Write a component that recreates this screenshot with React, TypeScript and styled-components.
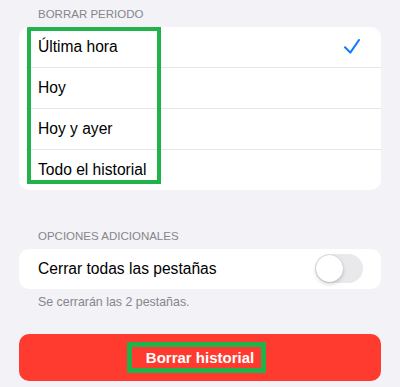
import styled, { createGlobalStyle } from "styled-components";

const GlobalStyle = createGlobalStyle`
  html, body {
    margin: 0;
    padding: 0;
    background: #f2f2f7;
  }
  body {
    font-family: "Liberation Sans", Arial, sans-serif;
    -webkit-font-smoothing: antialiased;
  }
`;

const Page = styled.div`
  width: 400px;
  height: 387px;
  overflow: hidden;
  padding: 0 19px;
  box-sizing: border-box;
  background: #f2f2f7;
`;

const SectionHeader = styled.div<{ $top: number }>`
  padding: ${(p) => p.$top}px 0 6.4px 19px;
  font-size: 11.5px;
  line-height: 14px;
  color: #86868b;
  text-transform: uppercase;
`;

const Card = styled.div`
  position: relative;
  background: #ffffff;
  border-radius: 10px;
  overflow: hidden;
`;

const Row = styled.div`
  display: flex;
  align-items: center;
  justify-content: space-between;
  height: 40px;
  padding: 0 18px 0 19px;
  font-size: 15.6px;
  color: #000000;
`;

const Separator = styled.div`
  height: 1px;
  margin-left: 7px;
  background: #e6e6ea;
`;

// recuadro verde de anotación encima de la lista
const Highlight = styled.div`
  position: absolute;
  left: 8px;
  top: 0;
  width: 134px;
  height: 157px;
  border: 4.5px solid #21b24b;
  box-sizing: border-box;
  pointer-events: none;
`;

const Check = styled.svg`
  width: 16px;
  height: 16px;
  margin-right: 3px;
`;

const Toggle = styled.div<{ $on: boolean }>`
  position: relative;
  width: 48px;
  height: 29px;
  border-radius: 15px;
  background: ${(p) => (p.$on ? "#34c759" : "#e9e9eb")};
`;

const Knob = styled.div<{ $on: boolean }>`
  position: absolute;
  top: 1px;
  left: ${(p) => (p.$on ? "20px" : "1px")};
  width: 27px;
  height: 27px;
  border-radius: 50%;
  background: #ffffff;
  box-shadow: 0 2px 4px rgba(0, 0, 0, 0.18), 0 0 1px rgba(0, 0, 0, 0.25);
`;

const Footer = styled.div`
  padding: 6px 0 0 19px;
  font-size: 12.4px;
  line-height: 15px;
  color: #86868b;
`;

const DeleteButton = styled.button`
  display: flex;
  align-items: center;
  justify-content: center;
  width: 100%;
  height: 47px;
  margin-top: 24px;
  border: none;
  border-radius: 10px;
  background: #ff3b30;
  color: #ffffff;
  font-family: inherit;
  cursor: pointer;
`;

const ButtonLabel = styled.span`
  display: inline-block;
  margin-right: 7px;
  padding: 0 7px 0 14px;
  border: 5px solid #21b24b;
  font-size: 15px;
  font-weight: bold;
  line-height: 21px;
`;

const periods = ["Última hora", "Hoy", "Hoy y ayer", "Todo el historial"];

function App() {
  const selected = 0;

  return (
    <Page>
      <GlobalStyle />
      <SectionHeader $top={6.6}>Borrar periodo</SectionHeader>
      <Card>
        {periods.map((label, index) => (
          <div key={label}>
            {index > 0 && <Separator />}
            <Row>
              <span>{label}</span>
              {index === selected && (
                <Check viewBox="0 0 16 16">
                  <polyline
                    points="1,8.2 6.3,13.6 15,1"
                    fill="none"
                    stroke="#0a7aff"
                    strokeWidth="2"
                    strokeLinecap="round"
                    strokeLinejoin="round"
                  />
                </Check>
              )}
            </Row>
          </div>
        ))}
        <Highlight />
      </Card>

      <SectionHeader $top={38.6}>Opciones adicionales</SectionHeader>
      <Card>
        <Row>
          <span>Cerrar todas las pestañas</span>
          <Toggle $on={false}>
            <Knob $on={false} />
          </Toggle>
        </Row>
      </Card>
      <Footer>Se cerrarán las 2 pestañas.</Footer>

      <DeleteButton>
        <ButtonLabel>Borrar historial</ButtonLabel>
      </DeleteButton>
    </Page>
  );
}

export default App;
